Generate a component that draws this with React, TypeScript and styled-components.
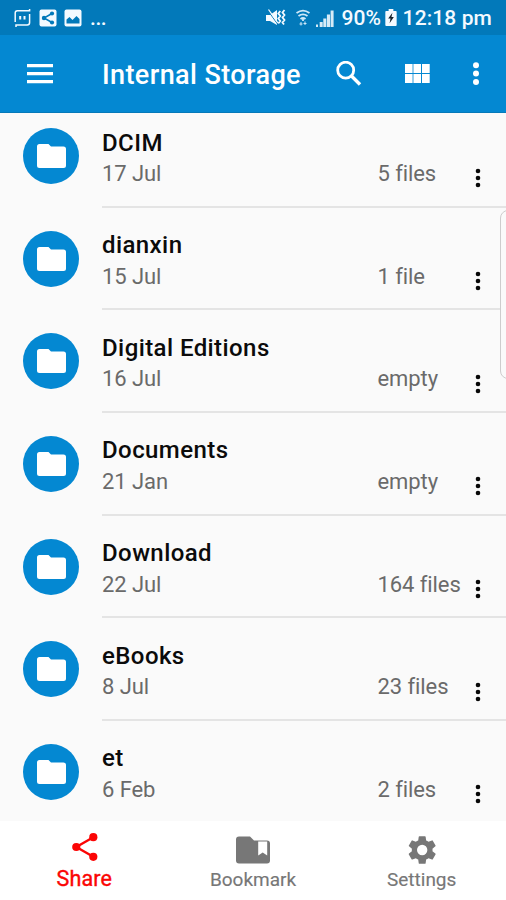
import React from 'react';
import styled, { createGlobalStyle } from 'styled-components';

const Global = createGlobalStyle`
  * { box-sizing: border-box; }
  body { margin: 0; background: #fafafa; }
`;

const Screen = styled.div`
  position: relative;
  width: 506px;
  height: 900px;
  display: flex;
  flex-direction: column;
  overflow: hidden;
  background: #fafafa;
  font-family: Roboto, sans-serif;
`;

const StatusBar = styled.div`
  height: 35px;
  flex: none;
  display: flex;
  align-items: center;
  justify-content: space-between;
  padding: 0 14px 0 14px;
  background: #0279ba;
  color: #f4faff;
`;

const StatusGroup = styled.div`
  display: flex;
  align-items: center;
  height: 35px;
`;

const StatusIcon = styled.svg<{ $gap?: number }>`
  display: block;
  flex: none;
  margin-right: ${p => p.$gap ?? 0}px;
`;

const StatusText = styled.span<{ $gap?: number; $tracking?: number }>`
  font-size: 21px;
  line-height: 35px;
  padding-top: 1px;
  font-weight: 500;
  white-space: nowrap;
  letter-spacing: ${p => p.$tracking ?? 0}px;
  margin-right: ${p => p.$gap ?? 0}px;
`;

const Toolbar = styled.header`
  height: 78px;
  flex: none;
  display: flex;
  align-items: center;
  padding: 0 22px 0 27px;
  background: #0488d2;
  border-bottom: 1px solid #0679b9;
  color: #fff;
`;

const Title = styled.h1`
  flex: 1;
  margin: 2px 0 0 49px;
  font-size: 27px;
  line-height: 36px;
  font-weight: 500;
  letter-spacing: 0.4px;
  white-space: nowrap;
`;

const ToolIcon = styled.svg<{ $gap?: number }>`
  display: block;
  flex: none;
  margin-right: ${p => p.$gap ?? 0}px;
`;

const List = styled.main`
  height: 708px;
  flex: none;
  overflow: hidden;
`;

const Rows = styled.div`
  margin-top: -8px;
`;

const Row = styled.div`
  display: flex;
  height: 102.67px;
  padding-left: 23px;
`;

const Badge = styled.div`
  flex: none;
  display: flex;
  align-items: center;
  justify-content: center;
  width: 56px;
  height: 56px;
  margin-top: 23px;
  border-radius: 50%;
  background: #0488d2;
`;

const Details = styled.div`
  flex: 1;
  margin-left: 23px;
  padding-top: 21.5px;
  border-bottom: 2px solid #e4e4e4;
`;

const Name = styled.div`
  font-size: 24px;
  line-height: 32px;
  font-weight: 500;
  letter-spacing: 0.42px;
  color: #0b0b0b;
  white-space: nowrap;
`;

const Meta = styled.div`
  display: grid;
  grid-template-columns: 275.5px 97.5px auto;
  padding-top: 0.5px;
  font-size: 22px;
  line-height: 30px;
  letter-spacing: -0.08px;
  color: #6a6a6a;
  white-space: nowrap;
`;

const RowMenu = styled.svg`
  display: block;
  margin-top: 9.3px;
`;

const ScrollThumb = styled.div`
  position: absolute;
  top: 210px;
  right: -20px;
  width: 26px;
  height: 169px;
  border: 1.5px solid #cdcdcd;
  border-radius: 8px;
  background: #fafafa;
`;

const BottomNav = styled.nav`
  flex: 1;
  display: grid;
  grid-template-columns: repeat(3, 1fr);
  background: #fff;
`;

const Tab = styled.div<{ $active?: boolean }>`
  display: flex;
  flex-direction: column;
  align-items: center;
  padding-top: 8px;
  color: ${p => (p.$active ? '#fb0505' : '#777')};
`;

const TabLabel = styled.span<{ $active?: boolean }>`
  font-size: ${p => (p.$active ? 21.5 : 19)}px;
  line-height: 26px;
  font-weight: 400;
  -webkit-text-stroke: ${p => (p.$active ? 0.4 : 0.15)}px currentColor;
  margin-top: ${p => (p.$active ? 1 : 2)}px;
  letter-spacing: ${p => (p.$active ? 0.15 : 0)}px;
`;

const folders = [
  ['DCIM', '17 Jul', '5 files'],
  ['dianxin', '15 Jul', '1 file'],
  ['Digital Editions', '16 Jul', 'empty'],
  ['Documents', '21 Jan', 'empty'],
  ['Download', '22 Jul', '164 files'],
  ['eBooks', '8 Jul', '23 files'],
  ['et', '6 Feb', '2 files'],
];

export default function App() {
  return (
    <>
      <Global />
      <Screen>
        <StatusBar>
          <StatusGroup>
            <StatusIcon $gap={7} width="18" height="20" viewBox="0 0 18 20" fill="none" stroke="currentColor" strokeWidth="1.5">
              <path d="M1.2 14V5Q1.2 2.8 3.4 2.8H15.6V1M15.6 6v8.5q0 2.5-2.5 2.5H2V19" />
              <path d="M6.2 8v3.4M10.5 8v3.4" strokeWidth="2" />
            </StatusIcon>
            <StatusIcon $gap={7} width="18" height="18" viewBox="0 0 18 18">
              <rect x=".5" y=".5" width="17" height="17" rx="2" fill="currentColor" />
              <path d="M13 4.5 5 9l8 4.5" fill="none" stroke="#0279ba" strokeWidth="1.5" />
              <circle cx="13" cy="4.5" r="2.1" fill="#0279ba" />
              <circle cx="5" cy="9" r="2.2" fill="#0279ba" />
              <circle cx="13" cy="13.5" r="2.1" fill="#0279ba" />
            </StatusIcon>
            <StatusIcon $gap={8} width="18" height="18" viewBox="0 0 18 18">
              <rect x=".5" y=".5" width="17" height="17" rx="2" fill="currentColor" />
              <path d="M2.5 14.5v-4L5.5 8l3 3 4-4 3 3v4.5z" fill="#0279ba" />
            </StatusIcon>
            <StatusText $tracking={-0.4}>...</StatusText>
          </StatusGroup>
          <StatusGroup>
            <StatusIcon $gap={10} width="20" height="18" viewBox="0 0 20 18">
              <path d="M0 6h4l7-5v15l-7-4H0z" fill="currentColor" />
              <path d="M1.5 1l10 14" stroke="#0279ba" strokeWidth="1" />
              <path d="M2.5.5 12 14" stroke="currentColor" strokeWidth="1.3" />
              <path d="M14.3 2l-2 2.5 2 2.5-2 2.5 2 2.5-2 2.5M18.5 1l-2 2.5 2 2.5-2 2.5 2 2.5-2 2.5 1.5 2" fill="none" stroke="currentColor" strokeWidth="1.8" />
            </StatusIcon>
            <StatusIcon $gap={6} width="14" height="18" viewBox="0 0 14 18" fill="none" stroke="#cfe8f8" strokeWidth="1.8">
              <path d="M.5 4Q7-.8 13.5 4M2.5 7Q7 3.6 11.5 7M4.5 10Q7 8 9.5 10" />
              <path d="M7 9v3" />
              <path d="M3.5 15h3M5 13v3.5M9 12.5V16M7.5 14.5h3" strokeWidth="1" />
            </StatusIcon>
            <StatusIcon $gap={7} width="18" height="18" viewBox="0 0 18 18" fill="currentColor">
              <path d="M0 15.5h2V18H0zM3.7 13h3v5h-3zM7.3 9.5h3V18h-3zM10.9 5.5h3.1V18h-3.1zM14.6 1.5h3V18h-3z" opacity=".88" />
            </StatusIcon>
            <StatusText $gap={3.5} $tracking={0.1}>90%</StatusText>
            <StatusIcon $gap={6} width="12" height="17" viewBox="0 0 12 18">
              <path d="M3.5 0h5v2H11q1 0 1 1v14q0 1-1 1H1q-1 0-1-1V3q0-1 1-1h2.5z" fill="currentColor" />
              <path d="M7.5 4 3 10h2.5L4.5 15 9 8.5H6.5z" fill="#17222b" />
            </StatusIcon>
            <StatusText $tracking={0.1}>12:18 pm</StatusText>
          </StatusGroup>
        </StatusBar>
        <Toolbar>
          <ToolIcon width="26" height="20" viewBox="0 0 26 20" fill="currentColor">
            <path d="M0 0h26v3.2H0zM0 8h26v3.2H0zM0 16h26v3.2H0z" />
          </ToolIcon>
          <Title>Internal Storage</Title>
          <ToolIcon $gap={43} width="26" height="26" viewBox="0 0 26 26" fill="none" stroke="currentColor" strokeWidth="2.8">
            <circle cx="9.7" cy="9.2" r="8" />
            <path d="m15.5 15 8.5 8.5" strokeWidth="3.4" />
          </ToolIcon>
          <ToolIcon $gap={38} width="25" height="19" viewBox="0 0 25 19" fill="currentColor">
            <path d="M0 0h7.6v9H0zM8.4 0H16v9H8.4zM17 0h7.7v9H17zM0 10h7.6v9H0zM8.4 10H16v9H8.4zM17 10h7.7v9H17z" />
          </ToolIcon>
          <ToolIcon width="16" height="24" viewBox="0 0 16 24" fill="currentColor">
            <circle cx="8" cy="3.2" r="3" /><circle cx="8" cy="11.6" r="3" /><circle cx="8" cy="20" r="3" />
          </ToolIcon>
        </Toolbar>
        <List>
          <Rows>
            {folders.map(([name, date, count]) => (
              <Row key={name}>
                <Badge>
                  <svg width="29" height="24" viewBox="0 0 29 24" fill="#fff">
                    <path d="M2.5 0H11.5l2.5 2.5h12.5q2.5 0 2.5 2.5v16.5q0 2.5-2.5 2.5h-24Q0 24 0 21.5v-19Q0 0 2.5 0z" />
                  </svg>
                </Badge>
                <Details>
                  <Name>{name}</Name>
                  <Meta>
                    <span>{date}</span>
                    <span>{count}</span>
                    <RowMenu width="6" height="20" viewBox="0 0 6 20" fill="#080808">
                      <circle cx="3" cy="3" r="2.3" /><circle cx="3" cy="10" r="2.3" /><circle cx="3" cy="17" r="2.3" />
                    </RowMenu>
                  </Meta>
                </Details>
              </Row>
            ))}
          </Rows>
        </List>
        <BottomNav>
          <Tab $active>
            <svg width="36" height="36" viewBox="0 0 36 36" fill="currentColor">
              <path d="M27.3 8.2 10.3 18l17 9.8" fill="none" stroke="currentColor" strokeWidth="2.4" />
              <circle cx="27.3" cy="8.2" r="4.1" /><circle cx="10.3" cy="18" r="4.1" /><circle cx="27.3" cy="27.8" r="4.1" />
            </svg>
            <TabLabel $active>Share</TabLabel>
          </Tab>
          <Tab>
            <svg width="36" height="36" viewBox="0 0 36 36" fill="currentColor">
              <path fillRule="evenodd" d="M4 7.5h11l4 4h13q3 0 3 3v17q0 3-3 3H4q-3 0-3-3v-21q0-3 3-3zM23.2 12.5v14l4.5-3 4.5 3v-14z" />
            </svg>
            <TabLabel>Bookmark</TabLabel>
          </Tab>
          <Tab>
            <svg width="36" height="36" viewBox="0 0 36 36" fill="currentColor">
              <g transform="translate(.9 3.7) scale(1.44)">
                <path d="M19.14 12.94c.04-.3.06-.61.06-.94 0-.32-.02-.64-.07-.94l2.03-1.58a.49.49 0 0 0 .12-.61l-1.92-3.32a.49.49 0 0 0-.59-.22l-2.39.96a7 7 0 0 0-1.62-.94l-.36-2.54a.48.48 0 0 0-.48-.41h-3.84a.47.47 0 0 0-.47.41l-.36 2.54c-.59.24-1.13.57-1.62.94l-2.39-.96a.48.48 0 0 0-.59.22L2.74 8.87a.47.47 0 0 0 .12.61l2.03 1.58c-.05.3-.09.63-.09.94s.02.64.07.94l-2.03 1.58a.49.49 0 0 0-.12.61l1.92 3.32c.12.22.37.29.59.22l2.39-.96c.5.38 1.03.7 1.62.94l.36 2.54c.05.24.24.41.48.41h3.84c.24 0 .44-.17.47-.41l.36-2.54c.59-.24 1.13-.56 1.62-.94l2.39.96c.22.08.47 0 .59-.22l1.92-3.32a.47.47 0 0 0-.12-.61zM12 15.6a3.6 3.6 0 1 1 0-7.2 3.6 3.6 0 0 1 0 7.2z" />
              </g>
            </svg>
            <TabLabel>Settings</TabLabel>
          </Tab>
        </BottomNav>
        <ScrollThumb />
      </Screen>
    </>
  );
}
